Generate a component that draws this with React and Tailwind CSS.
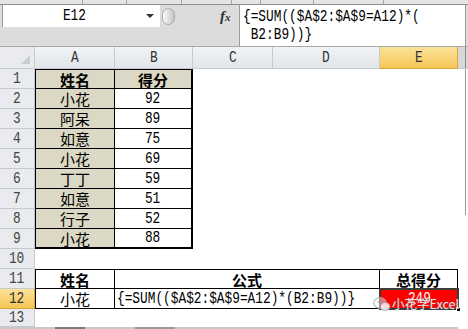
import React from "react";

const M = ({ children, className = "" }) => (
  <span
    className={
      "inline-block whitespace-pre font-['Liberation_Mono',monospace] text-[16px] leading-none scale-x-[0.8] " +
      className
    }
  >
    {children}
  </span>
);

const C = ({ children, bold }) => (
  <span
    className={
      "font-['Noto_Sans_CJK_SC',sans-serif] text-[15px] leading-none text-black " +
      (bold ? "font-bold" : "font-normal")
    }
  >
    {children}
  </span>
);

const RowHead = ({ n, active }) => (
  <div
    className={
      active
        ? "w-[35px] h-full shrink-0 flex items-center justify-center border-r border-b border-[#d9a93c] bg-linear-to-b from-[#fbe39a] to-[#f5c552] text-[#333]"
        : "w-[35px] h-full shrink-0 flex items-center justify-center border-r border-b border-[#c6cad0] bg-[#e9ebee] text-[#444]"
    }
  >
    <M>{n}</M>
  </div>
);

const names = ["小花", "阿呆", "如意", "小花", "丁丁", "如意", "行子", "小花"];
const scores = ["92", "89", "75", "69", "59", "51", "52", "88"];

export default function App() {
  return (
    <div className="relative w-[468px] h-[329px] overflow-hidden bg-white">
      {/* top strip */}
      <div className="flex h-[5px] bg-[#e4e4e4] border-b border-[#8c8c8c]">
        <div className="w-[83px] border-r border-[#a8a8a8]" />
        <div className="w-[44px] border-r border-[#a8a8a8]" />
        <div className="w-[55px] border-r border-[#a8a8a8]" />
        <div className="w-[50px] border-r border-[#a8a8a8]" />
        <div className="w-[29px] border-r border-[#a8a8a8]" />
        <div className="w-[53px] border-r border-[#a8a8a8]" />
        <div className="w-[70px] border-r border-[#a8a8a8]" />
        <div className="flex-1" />
      </div>

      {/* formula bar */}
      <div className="flex h-[42px] bg-[#dcdcdc] border-b border-[#a9a9a9]">
        <div className="w-[239px] flex flex-col">
          <div className="flex items-center h-[22px]">
            <div className="ml-[2px] w-[158px] h-[22px] bg-white border-l border-[#9c9c9c] flex items-center">
              <div className="w-[143px] flex justify-center text-black">
                <M>E12</M>
              </div>
              <div className="w-0 h-0 border-l-[4px] border-r-[4px] border-t-[4px] border-l-transparent border-r-transparent border-t-[#333]" />
            </div>
            <div className="ml-[2px] w-[13px] h-[17px] rounded-full bg-linear-to-r from-[#fafafa] to-[#c4c4c4] border border-[#a8a8a8]" />
            <div className="ml-[45px] font-['Liberation_Serif',serif] italic font-bold text-[15px] leading-none text-[#333]">
              f<span className="text-[11px]">x</span>
            </div>
          </div>
        </div>
        <div className="flex-1 mr-[2px] h-[41px] bg-white border-l border-r border-[#9c9c9c] pl-[3px] pt-[3px] text-black">
          <div className="h-[18px] flex items-center">
            <M className="origin-left">{"{=SUM(($A$2:$A$9=A12)*("}</M>
          </div>
          <div className="h-[18px] flex items-center">
            <M className="origin-left">{" B2:B9))}"}</M>
          </div>
        </div>
      </div>

      {/* grid */}
      <div className="flex">
        <div className="w-[458px] flex flex-col">
          {/* column headers */}
          <div className="flex h-[22px] text-[#333]">
            <div className="w-[35px] relative bg-[#e9ebee] border-r border-b border-[#c6cad0]">
              <div className="absolute right-[4px] bottom-[4px] w-0 h-0 border-b-[9px] border-l-[9px] border-b-[#c9ccd1] border-l-transparent" />
            </div>
            <div className="w-[80px] flex items-center justify-center bg-linear-to-b from-[#f1f3f5] to-[#e2e5e9] border-r border-b border-[#c6cad0]"><M>A</M></div>
            <div className="w-[78px] flex items-center justify-center bg-linear-to-b from-[#f1f3f5] to-[#e2e5e9] border-r border-b border-[#c6cad0]"><M>B</M></div>
            <div className="w-[80px] flex items-center justify-center bg-linear-to-b from-[#f1f3f5] to-[#e2e5e9] border-r border-b border-[#c6cad0]"><M>C</M></div>
            <div className="w-[107px] flex items-center justify-center bg-linear-to-b from-[#f1f3f5] to-[#e2e5e9] border-r border-b border-[#c6cad0]"><M>D</M></div>
            <div className="w-[78px] flex items-center justify-center bg-linear-to-b from-[#fbe39a] to-[#f5c552] border-r border-b border-[#d9a93c]"><M>E</M></div>
          </div>

          {/* row 1 */}
          <div className="flex h-[20px]">
            <RowHead n="1" />
            <div className="w-[80px] bg-[#dbd8c5] border border-black flex items-center justify-center"><C bold>姓名</C></div>
            <div className="w-[78px] bg-[#dbd8c5] border-t border-r-2 border-b border-black flex items-center justify-center"><C bold>得分</C></div>
            <div className="flex-1" />
          </div>

          {names.map((nm, i) => (
            <div key={i} className="flex h-[20px]">
              <RowHead n={String(i + 2)} />
              <div
                className={
                  i === 7
                    ? "w-[80px] bg-[#dbd8c5] border-l border-r border-b-2 border-black flex items-center justify-center"
                    : "w-[80px] bg-[#dbd8c5] border-l border-r border-b border-black flex items-center justify-center"
                }
              >
                <C>{nm}</C>
              </div>
              <div
                className={
                  i === 7
                    ? "w-[78px] bg-white border-r-2 border-b-2 border-black flex items-center justify-center text-black"
                    : "w-[78px] bg-white border-r-2 border-b border-black flex items-center justify-center text-black"
                }
              >
                <M>{scores[i]}</M>
              </div>
              <div className="flex-1" />
            </div>
          ))}

          {/* row 10 */}
          <div className="flex h-[20px]">
            <RowHead n="10" />
            <div className="flex-1" />
          </div>

          {/* row 11 */}
          <div className="flex h-[20px]">
            <RowHead n="11" />
            <div className="w-[80px] border border-black flex items-center justify-center"><C bold>姓名</C></div>
            <div className="w-[265px] border-t border-r border-b border-black flex items-center justify-center"><C bold>公式</C></div>
            <div className="w-[78px] border-t border-r border-b border-black flex items-center justify-center"><C bold>总得分</C></div>
          </div>

          {/* row 12 */}
          <div className="flex h-[20px]">
            <RowHead n="12" active />
            <div className="w-[80px] border-l border-r border-b border-black flex items-center justify-center"><C>小花</C></div>
            <div className="w-[265px] border-r border-b border-black flex items-center pl-[2px] text-black">
              <M className="origin-left">{"{=SUM(($A$2:$A$9=A12)*(B2:B9))}"}</M>
            </div>
            <div className="relative w-[78px] bg-[#ff0000] flex items-center justify-center text-white">
              <M>249</M>
              <div className="absolute inset-[-1px] border-2 border-[#3c3c3c]" />
              <div className="absolute right-[-3px] bottom-[-3px] w-[5px] h-[5px] bg-black border border-white" />
            </div>
          </div>

          {/* row 13 */}
          <div className="flex h-[18px]">
            <RowHead n="13" />
            <div className="flex-1" />
          </div>
          <div className="flex h-[2px] bg-[#c8c8c8]">
            <div className="w-[55px]" />
            <div className="w-[30px] bg-[#7a7a7a]" />
            <div className="w-[50px]" />
            <div className="w-[40px] bg-[#9a9a9a]" />
          </div>
        </div>

        {/* scrollbar */}
        <div className="w-[10px] flex flex-col">
          <div className="h-[22px] bg-[#d8d8d8] border-b border-[#c6cad0] flex">
            <div className="w-[7px]" />
            <div className="w-px bg-[#8a8a8a]" />
          </div>
          <div className="flex h-[146px]">
            <div className="w-[7px]" />
            <div className="w-px bg-[#9a9a9a]" />
          </div>
        </div>
      </div>

      {/* watermark */}
      <div className="absolute left-[373px] top-[296px] flex items-center gap-[1px] whitespace-nowrap opacity-85">
        <svg width="18" height="16" viewBox="0 0 18 16">
          <ellipse cx="7" cy="7" rx="6.2" ry="5.3" fill="#ffffff" fillOpacity="0.5" stroke="#b0b0b0" strokeWidth="1.2" />
          <ellipse cx="12" cy="10.5" rx="4.8" ry="4" fill="#ffffff" stroke="#b0b0b0" strokeWidth="1.2" />
          <circle cx="5" cy="5.8" r="0.9" fill="#b0b0b0" />
          <circle cx="9" cy="5.8" r="0.9" fill="#b0b0b0" />
        </svg>
        <span className="font-['Noto_Sans_CJK_SC',sans-serif] text-[12.5px] leading-none text-white [text-shadow:0_0_1px_#666,0_0_1px_#666]">
          小花学Excel
        </span>
      </div>
    </div>
  );
}
